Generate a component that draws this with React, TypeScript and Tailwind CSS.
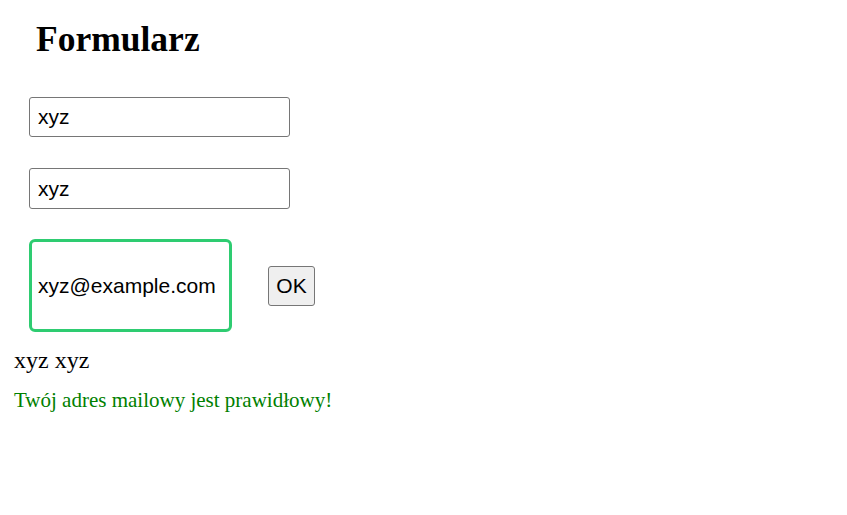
import React from "react";

export default function App() {
  const serif = { fontFamily: '"Liberation Serif", "Times New Roman", serif' } as React.CSSProperties;
  return (
    <div className="w-[847px] h-[515px] bg-white" style={serif}>
      <h1 className="pl-[36px] pt-[18px] text-[35.5px] leading-[42px] font-bold text-black font-['Liberation_Serif',serif]">
        Formularz
      </h1>
      <div className="pl-[29px] pt-[37px] flex flex-col gap-[31px]">
        <input
          readOnly
          value="xyz"
          className="w-[261px] h-[40px] border border-[#767676] rounded-[3px] px-[8px] text-[21px] text-black font-['Liberation_Sans',Arial,sans-serif] outline-none"
        />
        <input
          readOnly
          value="xyz"
          className="w-[261px] h-[41px] border border-[#767676] rounded-[3px] px-[8px] text-[21px] text-black font-['Liberation_Sans',Arial,sans-serif] outline-none"
        />
      </div>
      <div className="pl-[29px] pt-[30px] flex items-center gap-[36px]">
        <input
          readOnly
          value="xyz@example.com"
          className="w-[203px] h-[93px] border-[3px] border-[#2ecc71] rounded-[6px] px-[6px] text-[21px] text-black font-['Liberation_Sans',Arial,sans-serif] outline-none"
        />
        <button className="w-[47px] h-[40px] bg-[#efefef] border border-[#767676] rounded-[3px] text-[21px] text-black font-['Liberation_Sans',Arial,sans-serif]">
          OK
        </button>
      </div>
      <div className="pl-[14px] pt-[14px] text-[24px] leading-[28px] text-black">xyz xyz</div>
      <div className="pl-[14px] pt-[13px] text-[21px] leading-[26px] text-[#008000]">
        Twój adres mailowy jest prawidłowy!
      </div>
    </div>
  );
}
